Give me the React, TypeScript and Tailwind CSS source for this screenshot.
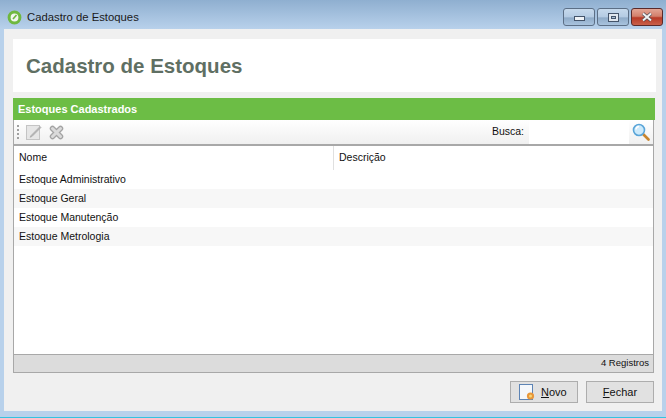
const rows = ["Estoque Administrativo", "Estoque Geral", "Estoque Manutenção", "Estoque Metrologia"];

function AppIcon() {
  return (
    <svg width="15" height="15" viewBox="0 0 15 15" className="shrink-0">
      <circle cx="7.5" cy="7.5" r="5.4" fill="#f2f6ee" stroke="#6fb83f" strokeWidth="3" />
      <path d="M6 9 9.5 5" stroke="#6fb83f" strokeWidth="1.6" />
    </svg>
  );
}

function WindowButtons() {
  return (
    <div className="flex gap-[2px] pt-2">
      <div className="flex h-[18px] w-[32px] items-center justify-center rounded-[3px] border border-[#5c6f86] bg-[linear-gradient(#c6d9ec_0%,#b4cbe3_50%,#8fabc8_55%,#a8c3de_100%)]">
        <div className="mt-[3px] h-[5px] w-[11px] border border-[#44546a] bg-[#eef2f6]" />
      </div>
      <div className="flex h-[18px] w-[32px] items-center justify-center rounded-[3px] border border-[#5c6f86] bg-[linear-gradient(#c6d9ec_0%,#b4cbe3_50%,#8fabc8_55%,#a8c3de_100%)]">
        <div className="flex h-[9px] w-[11px] items-center justify-center border border-[#44546a] bg-[#dfe6ee]">
          <div className="h-[3px] w-[5px] border border-[#44546a] bg-[#a9bed4]" />
        </div>
      </div>
      <div className="flex h-[18px] w-[32px] items-center justify-center rounded-[3px] border border-[#5a2a2a] bg-[linear-gradient(#e3a594_0%,#d37f6b_45%,#b83a26_55%,#c9604a_100%)]">
        <svg width="12" height="10" viewBox="0 0 12 10">
          <path d="M2 1.5 10 8.5M10 1.5 2 8.5" stroke="#4c4c55" strokeWidth="3.4" />
          <path d="M2 1.5 10 8.5M10 1.5 2 8.5" stroke="#f2f2f2" strokeWidth="2" />
        </svg>
      </div>
    </div>
  );
}

function EditIcon() {
  return (
    <svg width="16" height="16" viewBox="0 0 16 16">
      <rect x="0.5" y="1.5" width="13" height="14" fill="#e6e6e6" stroke="#c4c4c4" />
      <path d="M5 11.5 14 2.5l1 1-9 9-2 .8z" fill="#b5b5b5" stroke="#a5a5a5" strokeWidth="0.6" />
    </svg>
  );
}

function DeleteIcon() {
  return (
    <svg width="15" height="15" viewBox="0 0 15 15">
      <path d="M3.5 3.5l8 8M11.5 3.5l-8 8" stroke="#a4a4a4" strokeWidth="5.5" strokeLinecap="round" />
      <path d="M3.5 3.5l8 8M11.5 3.5l-8 8" stroke="#dadada" strokeWidth="3" strokeLinecap="round" />
    </svg>
  );
}

function SearchIcon() {
  return (
    <svg width="18" height="18" viewBox="0 0 18 18" className="shrink-0">
      <path d="M11 11l5.5 5.5" stroke="#c8842c" strokeWidth="2.6" strokeLinecap="round" />
      <circle cx="7" cy="7" r="5.5" fill="#cdeafb" stroke="#5aa5d8" strokeWidth="1.6" />
      <path d="M4 6.5a3.2 3.2 0 0 1 3-3" fill="none" stroke="#ffffff" strokeWidth="1.4" />
    </svg>
  );
}

function NewIcon() {
  return (
    <svg width="17" height="17" viewBox="0 0 17 17" className="shrink-0">
      <rect x="0.5" y="0.5" width="13" height="15" fill="#f4f7fb" stroke="#5d84b5" />
      <circle cx="11.5" cy="12" r="3.6" fill="#e8963a" />
      <circle cx="11.5" cy="12" r="1.5" fill="#f7d774" />
    </svg>
  );
}

export default function App() {
  return (
    <div className="flex h-[418px] w-[666px] flex-col border-b border-[#35c3e0] bg-[linear-gradient(#8fafd0_0px,#b8d1eb_29px)] font-['Liberation_Sans',sans-serif] text-[10.5px] text-[#111]">
      <div className="flex h-[29px] shrink-0 items-start pl-[7px] pr-[3px]">
        <div className="flex items-center gap-[5px] pt-[10px]">
          <AppIcon />
          <span className="text-[11.3px] leading-[15px] text-[#1a1a1a]">Cadastro de Estoques</span>
        </div>
        <div className="ml-auto">
          <WindowButtons />
        </div>
      </div>

      <div className="mx-[4px] mb-[6px] flex flex-1 flex-col bg-[#f0f0f0] pl-[9px] pr-[6px] pt-[10px]">
        <div className="flex h-[53px] items-center bg-white pl-[13px] pt-[1px]">
          <h1 className="text-[20.5px] font-bold text-[#5f6f63]">Cadastro de Estoques</h1>
        </div>

        <div className="mt-[6px] mr-px flex h-[22px] items-center bg-[#6cbd45] pl-[5px] text-[11px] font-bold text-white">
          Estoques Cadastrados
        </div>

        <div className="mr-[2px] flex flex-1 flex-col border-x border-b border-[#a8a8a8] bg-white">
          <div className="flex h-[26px] shrink-0 items-center border-b-2 border-[#a8a8a8] bg-[linear-gradient(#ffffff,#f0f0f0)]">
            <div className="ml-[3px] flex h-[14px] w-[2px] flex-col justify-between">
              <div className="h-[2px] bg-[#a0a0a0]" />
              <div className="h-[2px] bg-[#a0a0a0]" />
              <div className="h-[2px] bg-[#a0a0a0]" />
              <div className="h-[2px] bg-[#a0a0a0]" />
            </div>
            <div className="ml-[7px] flex items-center gap-[7px]">
              <EditIcon />
              <DeleteIcon />
            </div>
            <span className="ml-auto mr-[5px]">Busca:</span>
            <div className="mb-[1px] h-[24px] w-[100px] bg-white" />
            <div className="mx-[3px]">
              <SearchIcon />
            </div>
          </div>

          <div className="flex h-[24px] shrink-0">
            <div className="w-[320px] border-r border-[#e0e0e0] pl-[5px] pt-[4px]">Nome</div>
            <div className="pl-[5px] pt-[4px]">Descrição</div>
          </div>

          {rows.map((row, i) => (
            <div key={row} className={`flex h-[19px] shrink-0 items-center pl-[5px] ${i % 2 === 1 ? "bg-[#f7f7f7]" : "bg-white"}`}>
              {row}
            </div>
          ))}

          <div className="mt-auto flex h-[18px] shrink-0 items-center justify-end border-t border-[#a8a8a8] bg-[#dcdcdc] pr-[4px] text-[9.5px]">
            4 Registros
          </div>
        </div>

        <div className="flex h-[38px] shrink-0 items-center justify-end gap-[8px] pr-[2px]">
          <button type="button" className="flex h-[22px] w-[68px] items-center gap-[5px] border border-[#adadad] bg-[#e1e1e1] pl-[8px] text-[11px]">
            <NewIcon />
            <span><span className="underline">N</span>ovo</span>
          </button>
          <button type="button" className="flex h-[22px] w-[68px] items-center justify-center border border-[#adadad] bg-[#e1e1e1] text-[11px]">
            <span><span className="underline">F</span>echar</span>
          </button>
        </div>
      </div>
    </div>
  );
}
